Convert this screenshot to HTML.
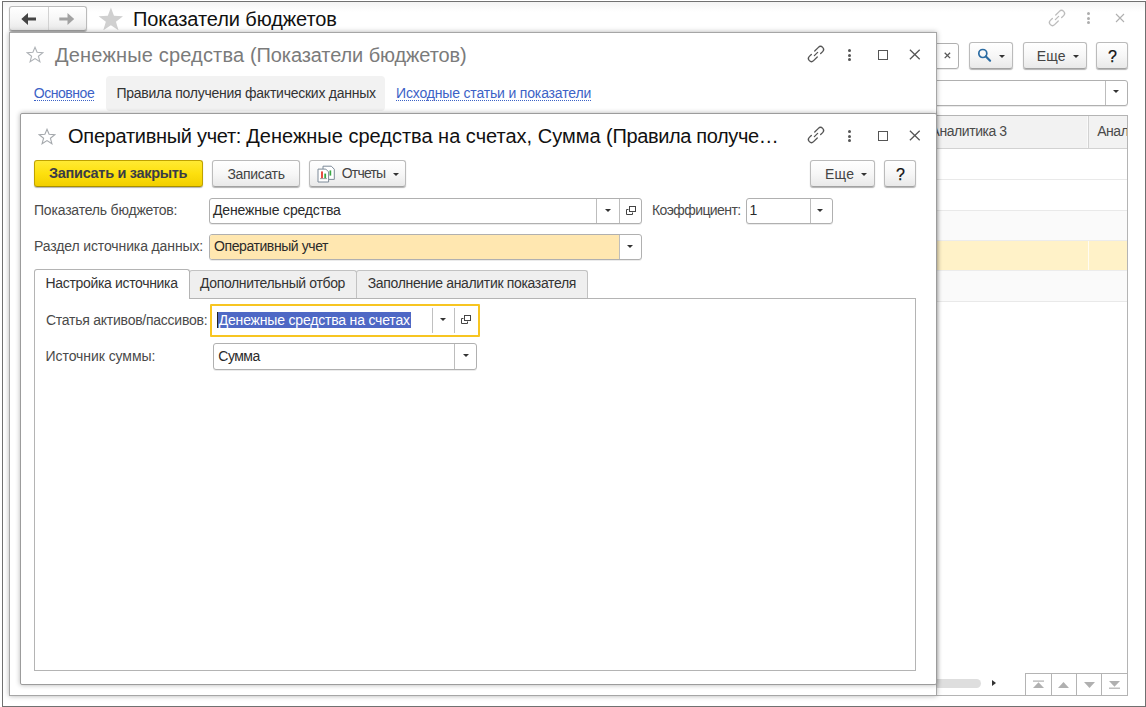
<!DOCTYPE html>
<html lang="ru"><head><meta charset="utf-8"><title>Показатели бюджетов</title>
<style>
*{box-sizing:border-box;margin:0;padding:0}
html,body{width:1146px;height:707px;overflow:hidden;background:#fff}
body{position:relative;font-family:"Liberation Sans",sans-serif;font-size:14px;color:#333;line-height:1}
.abs{position:absolute}
.frame{position:absolute;left:2px;top:1px;width:1144px;height:706px;border:1px solid #707070;background:linear-gradient(#f3f3f3,#fff 10px)}
.t{position:absolute;white-space:nowrap}
.btn{position:absolute;border:1px solid #bbb;border-bottom-color:#a2a2a2;border-radius:3px;background:linear-gradient(#ffffff,#f7f7f7 50%,#e9e9e9);box-shadow:0 1px 1px rgba(0,0,0,.3)}
.fld{position:absolute;border:1px solid #b0b0b0;border-radius:3px;background:#fff;box-shadow:0 1px 0 rgba(0,0,0,.08)}
.sep{position:absolute;top:0;bottom:0;width:1px;background:#bdbdbd}
.win{position:absolute;background:#fff;border:1px solid #a6a6a6;box-shadow:0 0 5px rgba(0,0,0,.3)}
.arr{position:absolute;width:0;height:0;border-left:3px solid transparent;border-right:3px solid transparent;border-top:3px solid #333}
a.lnk{color:#3c62c6;text-decoration:none;display:inline-block;border-bottom:1px dotted #3c62c6}
</style></head><body>
<div class="frame"></div>

<!-- main window header -->
<div class="btn" style="left:9px;top:6px;width:78px;height:25px"></div>
<div class="abs" style="left:48px;top:7px;width:1px;height:23px;background:#d2d2d2"></div>
<svg class="abs" style="left:20px;top:12px" width="18" height="14" viewBox="0 0 18 14"><path d="M1.300 7 L8 1 V5.500 H16 V8.500 H8 V13 Z" fill="#444"/></svg>
<svg class="abs" style="left:58px;top:12px" width="18" height="14" viewBox="0 0 18 14"><path d="M16.200 7 L9.500 1 V5.500 H1.300 V8.500 H9.500 V13 Z" fill="#a2a2a2"/></svg>
<svg class="abs" style="left:97.600px;top:6.800px" width="25.800" height="23.700" viewBox="0 0 25 23"><path d="M12.5 0.5 L15.5 8.6 L24.4 8.9 L17.4 14.3 L19.9 22.6 L12.5 17.8 L5.1 22.6 L7.6 14.3 L0.6 8.9 L9.5 8.6 Z" fill="#d0d0d0"/></svg>
<div class="t" style="left:133.00px;top:9px;font-size:20px;letter-spacing:-0.084px;color:#111;">Показатели бюджетов</div>

<!-- main window right side -->
<svg class="abs" style="left:1047px;top:8px" width="20" height="20" viewBox="-10 -10 20 20" fill="none" stroke="#bdbdbd" stroke-width="1.3" stroke-linecap="round"><g transform="rotate(-45)"><path d="M1.2 -3 H6.4 A3 3 0 0 1 6.400 3 H3.6"/><path d="M-1.2 3 H-6.4 A3 3 0 0 1 -6.400 -3 H-3.6"/><path d="M-2.3 0 H2.3"/></g></svg>
<div class="abs" style="left:1086.900px;top:12.100px;width:3px;height:3px;border-radius:50%;background:#adadad"></div>
<div class="abs" style="left:1086.900px;top:16.500px;width:3px;height:3px;border-radius:50%;background:#adadad"></div>
<div class="abs" style="left:1086.900px;top:20.700px;width:3px;height:3px;border-radius:50%;background:#adadad"></div>
<svg class="abs" style="left:1115px;top:13px" width="10" height="10" viewBox="0 0 10 10" stroke="#b0b0b0" stroke-width="1.1" fill="none"><path d="M1 1 L9 9 M9 1 L1 9"/></svg>

<div class="fld" style="left:880px;top:43px;width:79px;height:26px"></div>
<svg class="abs" style="left:943.700px;top:51.700px" width="7" height="7" viewBox="0 0 7 7" stroke="#5a5a5a" stroke-width="1.3" fill="none"><path d="M0.700 0.700 L6.100 6.100 M6.100 0.700 L0.700 6.100"/></svg>
<div class="btn" style="left:969px;top:42px;width:44px;height:27px"></div>
<svg class="abs" style="left:977px;top:48px" width="16" height="15" viewBox="0 0 16 15" fill="none" stroke="#2b6ca3" stroke-width="1.700"><circle cx="5.800" cy="5.500" r="4"/><path d="M8.900 8.500 L13.100 12.700" stroke-linecap="round" stroke-width="2.200"/></svg>
<div class="arr" style="left:999.3px;top:55px"></div>
<div class="btn" style="left:1023px;top:42px;width:64px;height:27px"></div>
<div class="t" style="left:1036.80px;top:49px;font-size:14px;letter-spacing:0.150px;color:#444;">Еще</div>
<div class="arr" style="left:1073.4px;top:55px"></div>
<div class="btn" style="left:1096px;top:42px;width:32px;height:27px"></div>
<div class="t" style="left:1107.90px;top:49px;font-size:16px;color:#111;-webkit-text-stroke:.25px #111;">?</div>

<div class="fld" style="left:700px;top:80px;width:428px;height:26px"><div class="sep" style="left:404px"></div></div>
<div class="arr" style="left:1112.8px;top:90px"></div>

<div class="abs" style="left:700px;top:115px;width:428px;height:581px;border:1px solid #b4b4b4;background:#fff"></div>
<div class="abs" style="left:701px;top:116px;width:426px;height:33px;background:#f2f2f2;border-bottom:1px solid #d2d2d2"></div>
<div class="abs" style="left:1087px;top:116px;width:1px;height:32px;background:#fafafa"></div>
<div class="abs" style="left:1088px;top:116px;width:1px;height:32px;background:#d2d2d2"></div>
<div class="t" style="left:930.600px;top:124px;color:#4a4a4a;letter-spacing:-0.45px">Аналитика 3</div>
<div class="abs" style="left:1096px;top:118px;width:31px;height:28px;overflow:hidden"><div class="t" style="left:1.200px;top:6px;color:#4a4a4a;letter-spacing:-0.45px">Аналитика 4</div></div>
<div class="abs" style="left:701px;top:179px;width:426px;height:1px;background:#e9e9e9"></div>
<div class="abs" style="left:701px;top:210px;width:426px;height:31px;background:#fafafa;border-top:1px solid #e9e9e9;border-bottom:1px solid #ececec"></div>
<div class="abs" style="left:701px;top:241px;width:426px;height:29px;background:#fff2c8"></div>
<div class="abs" style="left:1088px;top:241px;width:1px;height:29px;background:#fffcf2"></div>
<div class="abs" style="left:701px;top:270px;width:426px;height:32px;background:#fafafa;border-top:1px solid #ececec;border-bottom:1px solid #e9e9e9"></div>

<div class="abs" style="left:900px;top:679px;width:81px;height:9px;border-radius:5px;background:#dedede"></div>
<div class="abs" style="left:991.500px;top:679.500px;width:0;height:0;border-top:3.500px solid transparent;border-bottom:3.500px solid transparent;border-left:4px solid #333"></div>
<div class="abs" style="left:1025px;top:673px;width:103px;height:23px;border:1px solid #b4b4b4;background:#fff"></div>
<div class="abs" style="left:1051px;top:673px;width:1px;height:23px;background:#b4b4b4"></div>
<div class="abs" style="left:1076px;top:673px;width:1px;height:23px;background:#b4b4b4"></div>
<div class="abs" style="left:1101px;top:673px;width:1px;height:23px;background:#b4b4b4"></div>
<svg class="abs" style="left:1026px;top:674px" width="101" height="21" viewBox="0 0 101 21" fill="#b0b0b0"><rect x="7" y="6.5" width="11" height="1.2"/><path d="M7 14 L12.5 8.2 L18 14 Z"/><path d="M32 14 L37.500 8 L43 14 Z"/><path d="M58 8 L63.500 14 L69 8 Z"/><path d="M83 7 L88.500 12.8 L94 7 Z"/><rect x="83" y="13.6" width="11" height="1.2"/></svg>

<!-- window 2 -->
<div class="win" style="left:9px;top:32px;width:928px;height:664px"></div>
<svg class="abs" style="left:26px;top:46px" width="18" height="17" viewBox="0 0 18 17" fill="none" stroke="#aeb2b6" stroke-width="1.1" stroke-linejoin="miter"><path d="M9 1.3 L11.1 6.3 L16.8 6.7 L12.4 10.2 L13.9 15.7 L9 12.6 L4.1 15.7 L5.6 10.2 L1.2 6.7 L6.9 6.3 Z"/></svg>
<div class="t" style="left:55.10px;top:45px;font-size:20px;color:#7b7b7b;"><span style="letter-spacing:0.172px">Денежные средства </span><span style="letter-spacing:-0.105px">(Показатели бюджетов)</span></div>
<svg class="abs" style="left:806.1px;top:43.9px" width="20" height="20" viewBox="-10 -10 20 20" fill="none" stroke="#555" stroke-width="1.3" stroke-linecap="round"><g transform="rotate(-45)"><path d="M1.2 -3 H6.4 A3 3 0 0 1 6.400 3 H3.6"/><path d="M-1.2 3 H-6.4 A3 3 0 0 1 -6.400 -3 H-3.6"/><path d="M-2.3 0 H2.3"/></g></svg><div class="abs" style="left:848.4px;top:49.3px;width:3px;height:3px;border-radius:50%;background:#555"></div><div class="abs" style="left:848.4px;top:53.8px;width:3px;height:3px;border-radius:50%;background:#555"></div><div class="abs" style="left:848.4px;top:58.3px;width:3px;height:3px;border-radius:50%;background:#555"></div><div class="abs" style="left:878px;top:50px;width:9.5px;height:9.5px;border:1.2px solid #555"></div><svg class="abs" style="left:909px;top:49px" width="12" height="12" viewBox="0 0 12 12" stroke="#555" stroke-width="1.25" fill="none"><path d="M0.9 0.7 L10.7 10.3 M10.7 0.7 L0.9 10.3"/></svg>
<div class="abs" style="left:106px;top:76px;width:279px;height:35px;background:#f2f2f2;border-radius:4px"></div>
<div class="t" style="left:33.70px;top:86px;font-size:14px;letter-spacing:-0.452px;"><a class="lnk">Основное</a></div>
<div class="t" style="left:116.40px;top:86px;font-size:14px;letter-spacing:-0.245px;color:#333;">Правила получения фактических данных</div>
<div class="t" style="left:396.00px;top:86px;font-size:14px;letter-spacing:-0.169px;"><a class="lnk">Исходные статьи и показатели</a></div>

<!-- window 3 -->
<div class="win" style="left:20px;top:113px;width:917px;height:572px;border-color:#9c9c9c;border-radius:2px"></div>
<svg class="abs" style="left:38px;top:127.5px" width="18" height="17" viewBox="0 0 18 17" fill="none" stroke="#a4a8ac" stroke-width="1.1" stroke-linejoin="miter"><path d="M9 1.3 L11.1 6.3 L16.8 6.7 L12.4 10.2 L13.9 15.7 L9 12.6 L4.1 15.7 L5.6 10.2 L1.2 6.7 L6.9 6.3 Z"/></svg>
<div class="t" style="left:68.10px;top:126px;font-size:20px;color:#111;"><span style="letter-spacing:-0.299px">Оперативный учет: </span><span style="letter-spacing:0.001px">Денежные средства на счетах, </span><span style="letter-spacing:0.000px">Сумма </span><span style="letter-spacing:-0.364px">(Правила получе</span><span style="letter-spacing:0.000px">…</span></div>
<svg class="abs" style="left:806.1px;top:124.9px" width="20" height="20" viewBox="-10 -10 20 20" fill="none" stroke="#555" stroke-width="1.3" stroke-linecap="round"><g transform="rotate(-45)"><path d="M1.2 -3 H6.4 A3 3 0 0 1 6.400 3 H3.6"/><path d="M-1.2 3 H-6.4 A3 3 0 0 1 -6.400 -3 H-3.6"/><path d="M-2.3 0 H2.3"/></g></svg><div class="abs" style="left:848.4px;top:130.3px;width:3px;height:3px;border-radius:50%;background:#555"></div><div class="abs" style="left:848.4px;top:134.8px;width:3px;height:3px;border-radius:50%;background:#555"></div><div class="abs" style="left:848.4px;top:139.3px;width:3px;height:3px;border-radius:50%;background:#555"></div><div class="abs" style="left:878px;top:131px;width:9.5px;height:9.5px;border:1.2px solid #555"></div><svg class="abs" style="left:909px;top:130px" width="12" height="12" viewBox="0 0 12 12" stroke="#555" stroke-width="1.25" fill="none"><path d="M0.9 0.7 L10.7 10.3 M10.7 0.7 L0.9 10.3"/></svg>
<div class="btn" style="left:34px;top:160px;width:169px;height:27px;background:linear-gradient(#ffea33,#fde00e 50%,#f2cf00);border-color:#bfa200;border-bottom-color:#a89000"></div>
<div class="t" style="left:49.10px;top:166px;font-size:14.5px;font-weight:bold;letter-spacing:-0.311px;color:#3a3c46;">Записать и закрыть</div>
<div class="btn" style="left:212px;top:160px;width:88px;height:27px"></div>
<div class="t" style="left:227.50px;top:167px;font-size:14px;letter-spacing:-0.333px;color:#444;">Записать</div>
<div class="btn" style="left:309px;top:160px;width:97px;height:27px"></div>
<svg class="abs" style="left:316.500px;top:164.500px" width="18" height="18" viewBox="0 0 18 18"><path d="M6 1.200 H14.300 L17.300 4.200 V14.400 H6 Z" fill="#fff" stroke="#7d8a98" stroke-width="1" stroke-linejoin="round"/><rect x="12.500" y="5.400" width="1.700" height="5.200" fill="#3aa845"/><path d="M1 4.100 H8.800 L11.600 6.900 V17 H1 Z" fill="#fff" stroke="#7d8a98" stroke-width="1" stroke-linejoin="round"/><rect x="4.100" y="6.400" width="1.800" height="6.900" fill="#e53a2f"/><rect x="7.300" y="8.600" width="1.800" height="4.700" fill="#3aa845"/><rect x="3" y="13.300" width="7" height="0.800" fill="#8a8a8a"/></svg>
<div class="t" style="left:341.65px;top:166px;font-size:14px;letter-spacing:-0.776px;color:#444;">Отчеты</div>
<div class="arr" style="left:393px;top:173px"></div>
<div class="btn" style="left:810px;top:160px;width:65px;height:27px"></div>
<div class="t" style="left:824.90px;top:167px;font-size:14px;letter-spacing:0.300px;color:#444;">Еще</div>
<div class="arr" style="left:861.2px;top:173px"></div>
<div class="btn" style="left:884px;top:160px;width:32px;height:27px"></div>
<div class="t" style="left:896.10px;top:167px;font-size:16px;color:#111;-webkit-text-stroke:.25px #111;">?</div>

<div class="t" style="left:34.00px;top:203px;font-size:14px;letter-spacing:-0.194px;color:#4a4a4a;">Показатель бюджетов:</div>
<div class="fld" style="left:209px;top:198px;width:433px;height:26px"><div class="sep" style="left:386px"></div><div class="sep" style="left:409px"></div></div>
<div class="t" style="left:213.00px;top:203px;font-size:14px;letter-spacing:-0.156px;color:#2a2a2a;">Денежные средства</div>
<div class="arr" style="left:604.6px;top:208.5px"></div>
<svg class="abs" style="left:626px;top:205.5px" width="10" height="10" viewBox="0 0 10 10" fill="none" stroke="#444" stroke-width="1"><rect x="3.5" y="0.5" width="6" height="5"/><path d="M2.5 3.5 H0.5 V8.5 H6.5 V6.5"/></svg>
<div class="t" style="left:652.00px;top:203px;font-size:14px;letter-spacing:-0.592px;color:#4a4a4a;">Коэффициент:</div>
<div class="fld" style="left:746px;top:198px;width:87px;height:26px"><div class="sep" style="left:63px"></div></div>
<div class="t" style="left:749.60px;top:203px;font-size:14px;color:#2a2a2a;">1</div>
<div class="arr" style="left:817.3px;top:208.5px"></div>

<div class="t" style="left:34.00px;top:239px;font-size:14px;letter-spacing:-0.124px;color:#4a4a4a;">Раздел источника данных:</div>
<div class="fld" style="left:209px;top:234px;width:433px;height:26px"><div class="abs" style="left:0;top:0;bottom:0;width:409px;background:#ffe7b0;border-radius:2px 0 0 2px"></div><div class="sep" style="left:409px"></div></div>
<div class="t" style="left:214.00px;top:239px;font-size:14px;letter-spacing:-0.414px;color:#2a2a2a;">Оперативный учет</div>
<div class="arr" style="left:626.5px;top:244.5px"></div>

<!-- tabs -->
<div class="abs" style="left:34px;top:298px;width:882px;height:373px;border:1px solid #b4b4b4;background:#fff"></div>
<div class="abs" style="left:189px;top:270px;width:168px;height:28px;background:#efefef;border:1px solid #c2c2c2;border-bottom:none;border-radius:3px 3px 0 0"></div>
<div class="abs" style="left:356px;top:270px;width:232px;height:28px;background:#efefef;border:1px solid #c2c2c2;border-bottom:none;border-radius:3px 3px 0 0"></div>
<div class="abs" style="left:34px;top:269px;width:156px;height:30px;background:#fff;border:1px solid #b4b4b4;border-bottom:none;border-radius:3px 3px 0 0"></div>
<div class="t" style="left:45.50px;top:276px;font-size:14px;letter-spacing:-0.330px;color:#333;">Настройка источника</div>
<div class="t" style="left:200.00px;top:276px;font-size:14px;letter-spacing:-0.360px;color:#333;">Дополнительный отбор</div>
<div class="t" style="left:367.70px;top:276px;font-size:14px;letter-spacing:-0.335px;color:#333;">Заполнение аналитик показателя</div>

<div class="t" style="left:46.00px;top:313px;font-size:14px;letter-spacing:-0.248px;color:#4a4a4a;">Статья активов/пассивов:</div>
<div class="abs" style="left:210px;top:304px;width:270px;height:33px;border:2px solid #f7c521;background:#fff;border-radius:1px"></div>
<div class="abs" style="left:432px;top:308px;width:1px;height:25px;background:#c0c0c0"></div>
<div class="abs" style="left:454px;top:308px;width:1px;height:25px;background:#c0c0c0"></div>
<div class="abs" style="left:217.500px;top:311.500px;width:193px;height:16.500px;background:#4e68c5"></div>
<div class="abs" style="left:217px;top:312px;width:1px;height:16px;background:#222"></div>
<div class="t" style="left:218.70px;top:313px;font-size:14px;letter-spacing:-0.187px;color:#fff;">Денежные средства на счетах</div>
<div class="arr" style="left:439.6px;top:318px"></div>
<svg class="abs" style="left:461.3px;top:314.8px" width="10" height="10" viewBox="0 0 10 10" fill="none" stroke="#444" stroke-width="1"><rect x="3.5" y="0.5" width="6" height="5"/><path d="M2.5 3.5 H0.5 V8.5 H6.5 V6.5"/></svg>

<div class="t" style="left:45.50px;top:349px;font-size:14px;letter-spacing:-0.058px;color:#4a4a4a;">Источник суммы:</div>
<div class="fld" style="left:213px;top:343px;width:264px;height:27px"><div class="sep" style="left:240px"></div></div>
<div class="t" style="left:218.30px;top:349px;font-size:14px;letter-spacing:-0.501px;color:#2a2a2a;">Сумма</div>
<div class="arr" style="left:462.5px;top:354px"></div>
</body></html>
